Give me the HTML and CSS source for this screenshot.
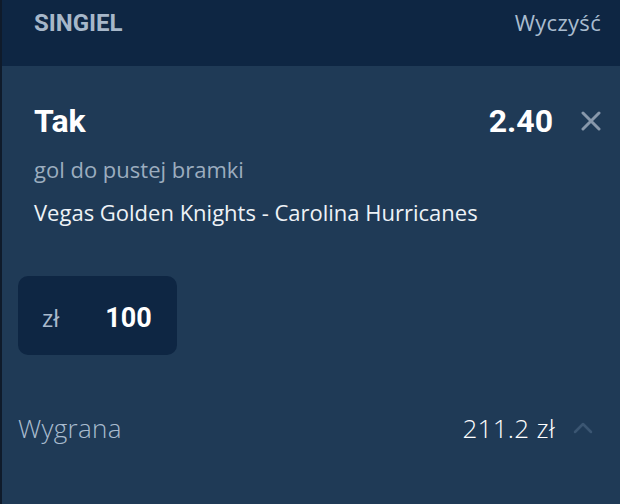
FILE: index.html
```html
<!DOCTYPE html>
<html lang="pl">
<head>
  <meta charset="UTF-8">
  <meta name="viewport" content="width=device-width, initial-scale=1.0">
  <title>Kupon</title>
  <link rel="stylesheet" href="styles.css">
</head>
<body>
  <!-- Slip header -->
  <header class="slip-head">
    <span class="slip-type">SINGIEL</span>
    <button class="slip-clear">Wyczyść</button>
  </header>

  <!-- Selection -->
  <section class="bet">
    <div class="bet-top">
      <span class="bet-pick">Tak</span>
      <span class="bet-odds">2.40</span>
      <button class="bet-remove" aria-label="Usuń">
        <svg width="20" height="20" viewBox="0 0 20 20">
          <path d="M2 2 L18 18 M18 2 L2 18" stroke="currentColor" stroke-width="3" stroke-linecap="round"/>
        </svg>
      </button>
    </div>
    <div class="bet-market">gol do pustej bramki</div>
    <div class="bet-event">Vegas Golden Knights - Carolina Hurricanes</div>
  </section>

  <div class="stake">
    <span class="stake-cur">zł</span>
    <span class="stake-amount">100</span>
  </div>

  <div class="win-row">
    <span class="win-label">Wygrana</span>
    <span class="win-value">211.2 zł</span>
    <svg class="win-toggle" width="20" height="12" viewBox="0 0 20 12">
      <path d="M2 10 L10 2 L18 10" fill="none" stroke="currentColor" stroke-width="2.5" stroke-linecap="round" stroke-linejoin="round"/>
    </svg>
  </div>
</body>
</html>
```

FILE: styles.css
```css
body {
  margin: 0;
  height: 504px;
  background: #1f3a56;
  border-left: 2px solid #0f1b2b;
  font-family: 'Open Sans', sans-serif;
  color: #fff;
  overflow: hidden;
}

button {
  font: inherit;
  background: none;
  border: none;
  padding: 0;
  cursor: pointer;
}

.slip-head {
  display: flex;
  align-items: baseline;
  justify-content: space-between;
  height: 66px;
  box-sizing: border-box;
  padding: 7px 19px 0 32px;
  background: #0e2643;
}
.slip-type {
  font-family: 'Roboto', sans-serif;
  font-weight: 700;
  font-size: 24px;
  line-height: 28px;
  color: #a7b7c9;
}
.slip-clear {
  font-size: 22px;
  letter-spacing: 0.3px;
  color: #a9bccf;
}

.bet {
  padding: 36px 19px 0 32px;
}
.bet-top {
  display: flex;
  align-items: center;
  font-family: 'Roboto', sans-serif;
  font-weight: 700;
  font-size: 32px;
  line-height: 38px;
}
.bet-pick {
  flex: 1;
}
.bet-remove {
  display: flex;
  margin-left: 28px;
  color: #8898ab;
}
.bet-market {
  margin-top: 15px;
  font-size: 22px;
  line-height: 28px;
  color: #9cadbf;
}
.bet-event {
  margin-top: 15px;
  font-size: 22px;
  line-height: 28px;
  color: #eef2f6;
}

.stake {
  display: flex;
  align-items: baseline;
  width: 159px;
  height: 79px;
  box-sizing: border-box;
  margin: 50px 0 0 16px;
  padding: 25px 0 0 24px;
  background: #0e2643;
  border-radius: 10px;
}
.stake-cur {
  font-size: 24px;
  color: #a9bacd;
}
.stake-amount {
  margin-left: 46px;
  font-family: 'Roboto', sans-serif;
  font-weight: 700;
  font-size: 27px;
  line-height: 32px;
}

.win-row {
  display: flex;
  align-items: center;
  margin-top: 57px;
  padding: 0 27px 0 16px;
  font-size: 26px;
  font-weight: 300;
  line-height: 32px;
  letter-spacing: 0.3px;
}
.win-label {
  flex: 1;
  color: #a9bccf;
}
.win-value {
  color: #fff;
}
.win-toggle {
  margin-left: 18px;
  color: #3b5672;
}
```
